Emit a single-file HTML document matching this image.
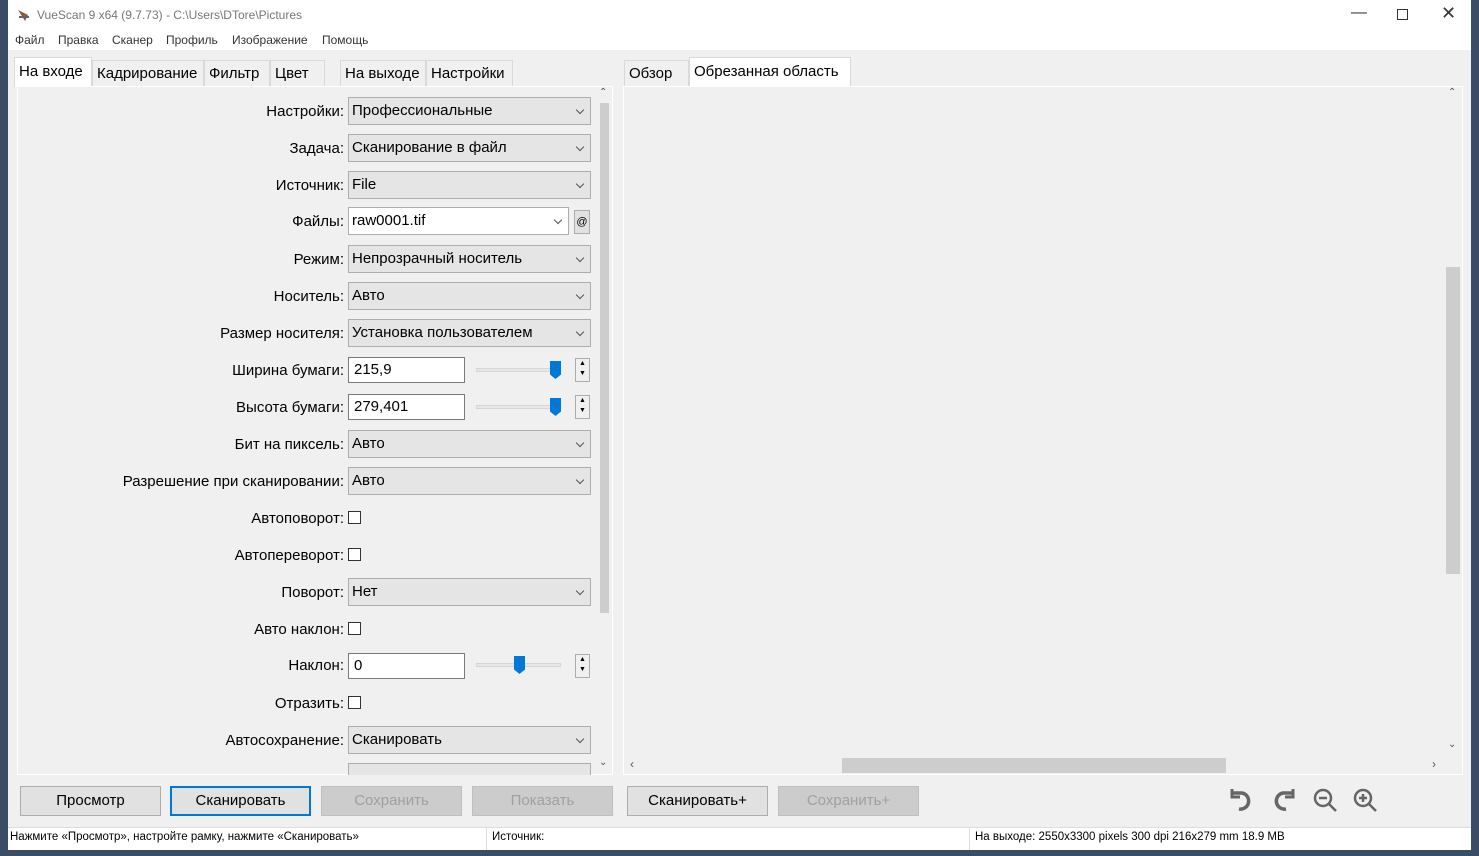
<!DOCTYPE html><html><head><meta charset="utf-8"><style>
*{box-sizing:border-box}
body{margin:0;width:1479px;height:856px;background:#3a4c66;font-family:"Segoe UI","Liberation Sans","DejaVu Sans",sans-serif;position:relative;overflow:hidden}
.win{position:absolute;left:8px;top:0;width:1463px;height:850px;background:#f0f0f0}
.abs{position:absolute}
.title{left:0;top:0;width:1463px;height:31px;background:#fff;font-size:12px;color:#777}
.menu{left:0;top:31px;width:1463px;height:19px;background:#fff;font-size:12px;color:#333}
.tab{position:absolute;top:60px;height:26px;font-size:15px;color:#000;padding:4px 4px;border:1px solid #d9d9d9;border-bottom:none;background:#f0f0f0}
.lbl{position:absolute;right:1127px;font-size:15px;color:#000;text-align:right;white-space:nowrap}
.sel{position:absolute;left:340px;width:243px;height:28px;background:#e5e5e5;border:1px solid #adadad;font-size:15px;padding:4px 3px}
.sel:after{content:"";position:absolute;right:7px;top:9px;width:5px;height:5px;border-right:1px solid #555;border-bottom:1px solid #555;transform:rotate(45deg)}
.inp{position:absolute;left:340px;width:117px;height:26px;background:#fff;border:1px solid #7a7a7a;font-size:15px;padding:3px 5px}
.cb{position:absolute;left:340px;width:13px;height:13px;border:1px solid #333;background:#fff}
.btn{position:absolute;top:786px;width:141px;height:30px;border:1px solid #adadad;background:#e1e1e1;font-size:15px;text-align:center;line-height:28px}
.dis{color:#a0a0a0;background:#ccc;border-color:#bfbfbf}
.track{position:absolute;left:468px;width:85px;height:4px;background:#e7e7e7;border:1px solid #d6d6d6}
.thumb{position:absolute;width:11px;height:18px;background:#0078d7;clip-path:polygon(0 0,100% 0,100% 75%,50% 100%,0 75%)}
.spin{position:absolute;left:567px;width:15px;height:24px;border:1px solid #adadad;background:#f0f0f0;font-size:7px;line-height:10px;text-align:center}
</style></head><body>
<div class="win">
<div class="abs title"><svg class="abs" style="left:8px;top:7px" width="16" height="16"><path d="M2 3l10 5-3 6z" fill="#8a5a3a"/><path d="M3 10h10" stroke="#666" stroke-width="2"/></svg><span class="abs" style="left:29px;top:8px">VueScan 9 x64 (9.7.73) - C:\Users\DTore\Pictures</span>
<span class="abs" style="left:1343px;top:4px;font-size:16px;color:#333">—</span>
<span class="abs" style="left:1389px;top:9px;width:11px;height:11px;border:1px solid #333"></span>
<span class="abs" style="left:1433px;top:3px;font-size:18px;color:#333">✕</span></div>
<div class="abs menu"><span class="abs" style="left:7px;top:2px">Файл</span><span class="abs" style="left:50px;top:2px">Правка</span><span class="abs" style="left:104px;top:2px">Сканер</span><span class="abs" style="left:158px;top:2px">Профиль</span><span class="abs" style="left:224px;top:2px">Изображение</span><span class="abs" style="left:314px;top:2px">Помощь</span></div>
<div class="tab" style="left:6px;top:57px;height:30px;background:#fff;width:78px;padding-top:5px">На входе</div>
<div class="tab" style="left:84px;width:112px">Кадрирование</div>
<div class="tab" style="left:196px;width:66px">Фильтр</div>
<div class="tab" style="left:262px;width:55px">Цвет</div>
<div class="tab" style="left:332px;width:86px">На выходе</div>
<div class="tab" style="left:418px;width:87px">Настройки</div>
<div class="abs" style="left:9px;top:86px;width:596px;height:689px;border:1px solid #fff;background:#f0f0f0;overflow:hidden">
<div class="abs" style="left:578px;top:0;width:17px;height:687px;background:#f0f0f0"><div class="abs" style="left:4px;top:16px;width:9px;height:510px;background:#cdcdcd"></div><span class="abs" style="left:3px;top:0;font-size:10px;color:#555">⌃</span><span class="abs" style="left:3px;top:670px;font-size:10px;color:#555">⌄</span></div>
</div>
<div style="position:absolute;left:0;top:0;width:1463px;height:775px;overflow:hidden">
<div class="lbl" style="top:103px">Настройки:</div><div class="sel" style="top:97px">Профессиональные</div>
<div class="lbl" style="top:140px">Задача:</div><div class="sel" style="top:134px">Сканирование в файл</div>
<div class="lbl" style="top:177px">Источник:</div><div class="sel" style="top:171px">File</div>
<div class="lbl" style="top:213px">Файлы:</div><div class="sel" style="top:207px;width:221px;background:#fff">raw0001.tif</div><div class="abs" style="left:566px;top:210px;width:16px;height:24px;border:1px solid #adadad;font-size:11px;text-align:center;line-height:22px;background:#e1e1e1">@</div>
<div class="lbl" style="top:251px">Режим:</div><div class="sel" style="top:245px">Непрозрачный носитель</div>
<div class="lbl" style="top:288px">Носитель:</div><div class="sel" style="top:282px">Авто</div>
<div class="lbl" style="top:325px">Размер носителя:</div><div class="sel" style="top:319px">Установка пользователем</div>
<div class="lbl" style="top:362px">Ширина бумаги:</div><div class="inp" style="top:357px">215,9</div><div class="track" style="top:368px"></div><div class="thumb" style="left:542px;top:361px"></div><div class="spin" style="top:358px">▲<br>▼</div>
<div class="lbl" style="top:399px">Высота бумаги:</div><div class="inp" style="top:394px">279,401</div><div class="track" style="top:405px"></div><div class="thumb" style="left:542px;top:398px"></div><div class="spin" style="top:395px">▲<br>▼</div>
<div class="lbl" style="top:436px">Бит на пиксель:</div><div class="sel" style="top:430px">Авто</div>
<div class="lbl" style="top:473px">Разрешение при сканировании:</div><div class="sel" style="top:467px">Авто</div>
<div class="lbl" style="top:510px">Автоповорот:</div><div class="cb" style="top:511px"></div>
<div class="lbl" style="top:547px">Автопереворот:</div><div class="cb" style="top:548px"></div>
<div class="lbl" style="top:584px">Поворот:</div><div class="sel" style="top:578px">Нет</div>
<div class="lbl" style="top:621px">Авто наклон:</div><div class="cb" style="top:622px"></div>
<div class="lbl" style="top:657px">Наклон:</div><div class="inp" style="top:653px">0</div><div class="track" style="top:663px"></div><div class="thumb" style="left:506px;top:656px"></div><div class="spin" style="top:654px">▲<br>▼</div>
<div class="lbl" style="top:695px">Отразить:</div><div class="cb" style="top:696px"></div>
<div class="lbl" style="top:732px">Автосохранение:</div><div class="sel" style="top:726px">Сканировать</div>
<div class="sel" style="top:763px"></div>
</div>
<div class="tab" style="left:616px;top:60px;width:65px">Обзор</div>
<div class="tab" style="left:681px;top:57px;height:30px;background:#fff;width:162px;padding-top:5px">Обрезанная область</div>
<div class="abs" style="left:615px;top:86px;width:840px;height:689px;border:1px solid #fff;background:#f0f0f0">
<div class="abs" style="left:821px;top:0;width:17px;height:670px"><div class="abs" style="left:1px;top:180px;width:14px;height:307px;background:#cdcdcd"></div><span class="abs" style="left:3px;top:0;font-size:10px;color:#555">⌃</span><span class="abs" style="left:3px;top:652px;font-size:10px;color:#555">⌄</span></div>
<div class="abs" style="left:0;top:670px;width:821px;height:17px"><div class="abs" style="left:218px;top:1px;width:384px;height:15px;background:#cdcdcd"></div><span class="abs" style="left:6px;top:0;font-size:12px;color:#555">‹</span><span class="abs" style="left:808px;top:0;font-size:12px;color:#555">›</span></div>
</div>
<div class="btn" style="left:12px">Просмотр</div>
<div class="btn" style="left:162px;border:2px solid #0078d7;line-height:26px">Сканировать</div>
<div class="btn dis" style="left:313px">Сохранить</div>
<div class="btn dis" style="left:464px">Показать</div>
<div class="btn" style="left:619px">Сканировать+</div>
<div class="btn dis" style="left:770px">Сохранить+</div>
<svg class="abs" style="left:1220px;top:786px" width="160" height="30" fill="none" stroke="#666" stroke-width="3.5">
<path d="M5 7h9a8 8 0 1 1 -3 16" /><path d="M4 3v8h8" stroke-width="3"/>
<path d="M64 7h-9a8 8 0 1 0 3 16"/><path d="M65 3v8h-8" stroke-width="3"/>
<g stroke-width="2.5"><circle cx="95" cy="12" r="8"/><path d="M101 18l7 7M91 12h8"/><circle cx="135" cy="12" r="8"/><path d="M141 18l7 7M131 12h8M135 8v8"/></g></svg>
<div class="abs" style="left:0;top:827px;width:1463px;height:23px;background:#fff;border-top:1px solid #ddd;font-size:11.5px;color:#000">
<span class="abs" style="left:2px;top:3px">Нажмите «Просмотр», настройте рамку, нажмите «Сканировать»</span>
<span class="abs" style="left:478px;top:0;height:22px;border-left:1px solid #ddd"></span>
<span class="abs" style="left:484px;top:3px">Источник:</span>
<span class="abs" style="left:961px;top:0;height:22px;border-left:1px solid #ddd"></span>
<span class="abs" style="left:967px;top:3px">На выходе: 2550x3300 pixels 300 dpi 216x279 mm 18.9 MB</span></div>
</div>
</body></html>
